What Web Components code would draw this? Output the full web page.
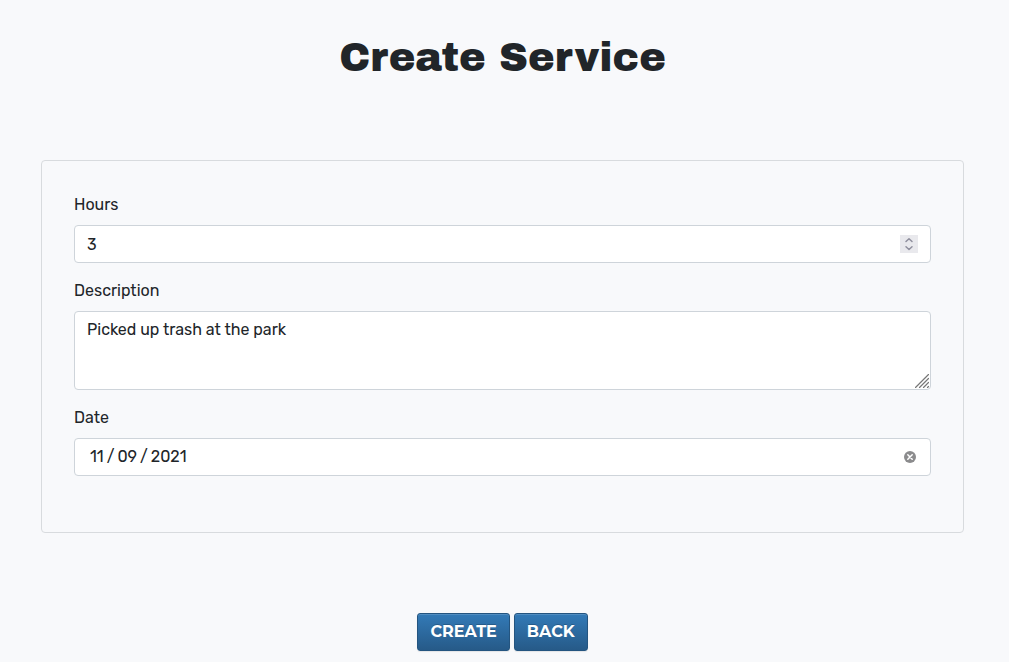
<!DOCTYPE html>
<html lang="en-US">
<head>
<meta charset="utf-8">
<meta name="viewport" content="width=device-width, initial-scale=1">
<title>Create Service</title>
<style>
  body {
    margin: 0;
    background: #f8f9fb;
    color: #212529;
    font: 400 16px/24px Rubik, Inter, sans-serif;
  }
</style>
</head>
<body>
<service-page>
  <span slot="title">Create Service</span>
  <form-card>
    <number-field label="Hours" value="3"></number-field>
    <text-field label="Description" value="Picked up trash at the park"></text-field>
    <date-field label="Date" value="2021-11-09"></date-field>
  </form-card>
  <action-button slot="actions">CREATE</action-button>
  <action-button slot="actions">BACK</action-button>
</service-page>
<script>
  const fieldStyles = `
    :host { display: block; margin-bottom: 16px; }
    label { display: block; margin-bottom: 8px; }
    .box { position: relative; }
    input, textarea {
      display: block; box-sizing: border-box; width: 100%; margin: 0;
      padding: 6px 12px; border: 1px solid #ced4da; border-radius: 4px;
      background: #fff; color: #212529; font: inherit; outline: none;
    }
    input { height: 38px; }
    input:focus, textarea:focus { border-color: #86b7fe; }
    button { padding: 0; border: 0; background: none; }
    svg { display: block; }
  `;

  class Field extends HTMLElement {
    connectedCallback() {
      if (this.shadowRoot) return;
      const root = this.attachShadow({ mode: "open" });
      root.innerHTML = `<style>${fieldStyles}${this.styles()}</style>
        <label for="control"></label><div class="box">${this.control()}</div>`;
      root.querySelector("label").textContent = this.getAttribute("label");
      this.input = root.getElementById("control");
      this.input.value = this.getAttribute("value");
      this.bind(root);
    }
    bind() {}
  }

  customElements.define("number-field", class extends Field {
    styles() {
      return `
        input { appearance: textfield; }
        input::-webkit-inner-spin-button { appearance: none; margin: 0; }
        .spin { position: absolute; top: 10px; right: 13px; width: 18px; background: #e9e9ed; }
        button { display: block; width: 18px; height: 9px; }
      `;
    }
    control() {
      const arrow = d => `<svg width="18" height="9" viewBox="0 0 18 9" fill="none" stroke="#8f8f9d" stroke-width="1.5" stroke-linecap="round" stroke-linejoin="round"><path d="${d}"/></svg>`;
      return `<input id="control" type="number" min="0">
        <div class="spin">
          <button type="button" data-step="1" aria-label="Increase">${arrow("M6 6.5 9 3.7 12 6.5")}</button>
          <button type="button" data-step="-1" aria-label="Decrease">${arrow("M6 2.7 9 5.5 12 2.7")}</button>
        </div>`;
    }
    bind(root) {
      root.querySelectorAll("button").forEach(b => b.addEventListener("click", () =>
        b.dataset.step > 0 ? this.input.stepUp() : this.input.stepDown()));
    }
  });

  customElements.define("text-field", class extends Field {
    styles() {
      return `
        textarea { min-height: 79px; resize: vertical; }
        textarea::-webkit-resizer { background: none; }
        svg { position: absolute; right: 2px; bottom: 2px; pointer-events: none; }
      `;
    }
    control() {
      return `<textarea id="control" rows="2"></textarea>
        <svg width="14" height="14" viewBox="0 0 14 14" stroke="#777" stroke-width="1.2" stroke-linecap="round" fill="none"><path d="M.5 13.5 13.5.5M4.5 13.5 13.5 4.5M8.5 13.5 13.5 8.5M12.5 13.5 13.5 12.5"/></svg>`;
    }
  });

  customElements.define("date-field", class extends Field {
    styles() {
      return `
        input::-webkit-calendar-picker-indicator { display: none; }
        input::-webkit-datetime-edit { padding: 0 2px; }
        input::-webkit-datetime-edit-text { padding: 0 2px; }
        button { position: absolute; top: 13px; right: 15px; }
      `;
    }
    control() {
      return `<input id="control" type="date">
        <button type="button" aria-label="Clear">
          <svg width="12" height="12" viewBox="0 0 12 12"><circle cx="6" cy="6" r="6" fill="#8b8b8d"/><path d="M3.8 3.8 8.2 8.2M8.2 3.8 3.8 8.2" stroke="#fff" stroke-width="1.5" stroke-linecap="round"/></svg>
        </button>`;
    }
    bind(root) {
      root.querySelector("button").addEventListener("click", () => { this.input.value = ""; });
    }
  });

  customElements.define("form-card", class extends HTMLElement {
    constructor() {
      super();
      this.attachShadow({ mode: "open" }).innerHTML = `<style>
        :host { display: block; padding: 32px 32px 40px; border: 1px solid #d8dbde; border-radius: 4px; }
      </style><slot></slot>`;
    }
  });

  customElements.define("action-button", class extends HTMLElement {
    constructor() {
      super();
      this.attachShadow({ mode: "open" }).innerHTML = `<style>
        :host { display: block; }
        button {
          display: block; padding: 6px 12px; border: 1px solid #245580; border-radius: 3px;
          background: linear-gradient(#337ab7, #265a88); color: #fff;
          font: 700 16px/24px Montserrat, Inter, sans-serif;
          text-shadow: 0 -1px 0 rgba(0, 0, 0, .2);
          box-shadow: inset 0 1px 0 rgba(255, 255, 255, .15), 0 1px 1px rgba(0, 0, 0, .08);
        }
        button:hover { background: #265a88; }
      </style><button type="button"><slot></slot></button>`;
    }
  });

  customElements.define("service-page", class extends HTMLElement {
    constructor() {
      super();
      this.attachShadow({ mode: "open" }).innerHTML = `<style>
        :host { display: block; padding: 34px 45px 11px 41px; }
        h1 { margin: 0 0 78px; text-align: center; font: 400 40px/48px "Archivo Black", Inter, sans-serif; }
        .actions { display: flex; justify-content: center; gap: 4px; margin-top: 80px; }
      </style>
      <main>
        <h1><slot name="title"></slot></h1>
        <slot></slot>
        <div class="actions"><slot name="actions"></slot></div>
      </main>`;
    }
  });
</script>
</body>
</html>
